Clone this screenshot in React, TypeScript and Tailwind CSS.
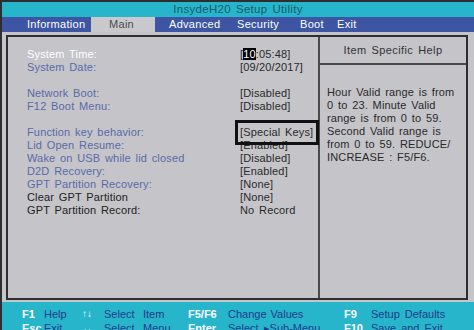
const rows: ({ label: string; value: string; tone: 'sel' | 'blue' | 'dark' } | null)[] = [
  { label: 'System Time:', value: 'time', tone: 'sel' },
  { label: 'System Date:', value: '[09/20/2017]', tone: 'blue' },
  null,
  { label: 'Network Boot:', value: '[Disabled]', tone: 'blue' },
  { label: 'F12 Boot Menu:', value: '[Disabled]', tone: 'blue' },
  null,
  { label: 'Function key behavior:', value: 'special', tone: 'blue' },
  { label: 'Lid Open Resume:', value: '[Enabled]', tone: 'blue' },
  { label: 'Wake on USB while lid closed', value: '[Disabled]', tone: 'blue' },
  { label: 'D2D Recovery:', value: '[Enabled]', tone: 'blue' },
  { label: 'GPT Partition Recovery:', value: '[None]', tone: 'blue' },
  { label: 'Clear GPT Partition', value: '[None]', tone: 'dark' },
  { label: 'GPT Partition Record:', value: 'No Record', tone: 'dark' },
];

const helpLines = [
  'Hour Valid range is from',
  '0 to 23. Minute Valid',
  'range is from 0 to 59.',
  'Second Valid range is',
  'from 0 to 59. REDUCE/',
  'INCREASE : F5/F6.',
];

function Value({ value }: { value: string }) {
  if (value === 'time') {
    return (
      <span>
        [<span className="bg-black text-white">10</span>:05:48]
      </span>
    );
  }
  if (value === 'special') {
    return (
      <span className="relative inline-block">
        [Special Keys]
        <span className="absolute left-[-5px] top-[-6px] w-[84px] h-[25px] border-[3px] border-[#111]" />
      </span>
    );
  }
  return <span>{value}</span>;
}

export default function App() {
  return (
    <div className="w-[474px] h-[330px] overflow-hidden bg-[#c4c4c9] border-l-2 border-t-2 border-[#2e2e2e] flex flex-col font-['Liberation_Sans',Arial,sans-serif] text-[11px] leading-[13px] tracking-[0.15px] [word-spacing:1.5px]">
      {/* Title bar */}
      <div className="h-[15px] shrink-0 bg-[#27b5cb] flex items-center justify-center text-[#1c5a68] text-[11.5px] tracking-[0.3px]">
        InsydeH20 Setup Utility
      </div>

      {/* Menu bar */}
      <div className="h-[15px] shrink-0 bg-[#3d55a3] flex items-center text-white tracking-[0.3px]">
        <span className="ml-[25px] w-[64px]">Information</span>
        <span className="w-[64px] h-full flex items-center pl-[18px] bg-[#c9c9cd] text-[#4a4a52]">Main</span>
        <span className="pl-[14px] w-[82px]">Advanced</span>
        <span className="w-[63px]">Security</span>
        <span className="w-[37px]">Boot</span>
        <span>Exit</span>
      </div>

      {/* Main box */}
      <div className="h-[265px] shrink-0 ml-[4px] mr-[6px] mt-[3px] border-2 border-[#2e2e2e] flex">
        <div className="w-[312px] shrink-0 border-r-2 border-[#4a4a4a] pt-[11px] pl-[19px]">
          {rows.map((r, i) =>
            r ? (
              <div key={i} className="flex h-[13px]">
                <span
                  className={
                    'w-[213px] shrink-0 ' +
                    (r.tone === 'sel' ? 'text-white' : r.tone === 'blue' ? 'text-[#5a6aa8]' : 'text-[#222]')
                  }
                >
                  {r.label}
                </span>
                <span className="text-[#2a2a2a]">
                  <Value value={r.value} />
                </span>
              </div>
            ) : (
              <div key={i} className="h-[13px]" />
            )
          )}
        </div>
        <div className="flex-1">
          <div className="h-[28px] border-b-2 border-[#4a4a4a] flex items-center justify-center text-[#333] tracking-[0.4px]">
            Item Specific Help
          </div>
          <div className="pl-[7px] pt-[21px] text-[#2a2a2a]">
            {helpLines.map((l) => (
              <div key={l} className="h-[13px] whitespace-nowrap">
                {l}
              </div>
            ))}
          </div>
        </div>
      </div>

      {/* Footer */}
      <div className="h-[28px] shrink-0 mt-[2px] bg-[#27b5cb] pt-[5px] pl-[20px] tracking-normal [word-spacing:2px] text-[#1e3c8c] leading-[14px]">
        <div className="grid grid-cols-[22px_38px_22px_39px_45px_40px_116px_27px_1fr]">
          <span className="text-white font-bold">F1</span>
          <span>Help</span>
          <span className="text-white font-bold text-[10px]">↑↓</span>
          <span>Select</span>
          <span>Item</span>
          <span className="text-white font-bold">F5/F6</span>
          <span className="flex gap-[4px]">
            <span>Change</span>
            <span>Values</span>
          </span>
          <span className="text-white font-bold">F9</span>
          <span>Setup Defaults</span>

          <span className="text-white font-bold">Esc</span>
          <span>Exit</span>
          <span className="text-white font-bold">↔</span>
          <span>Select</span>
          <span>Menu</span>
          <span className="text-white font-bold">Enter</span>
          <span className="flex gap-[5px]">
            <span>Select</span>
            <span>▸Sub-Menu</span>
          </span>
          <span className="text-white font-bold">F10</span>
          <span>Save and Exit</span>
        </div>
      </div>
    </div>
  );
}
